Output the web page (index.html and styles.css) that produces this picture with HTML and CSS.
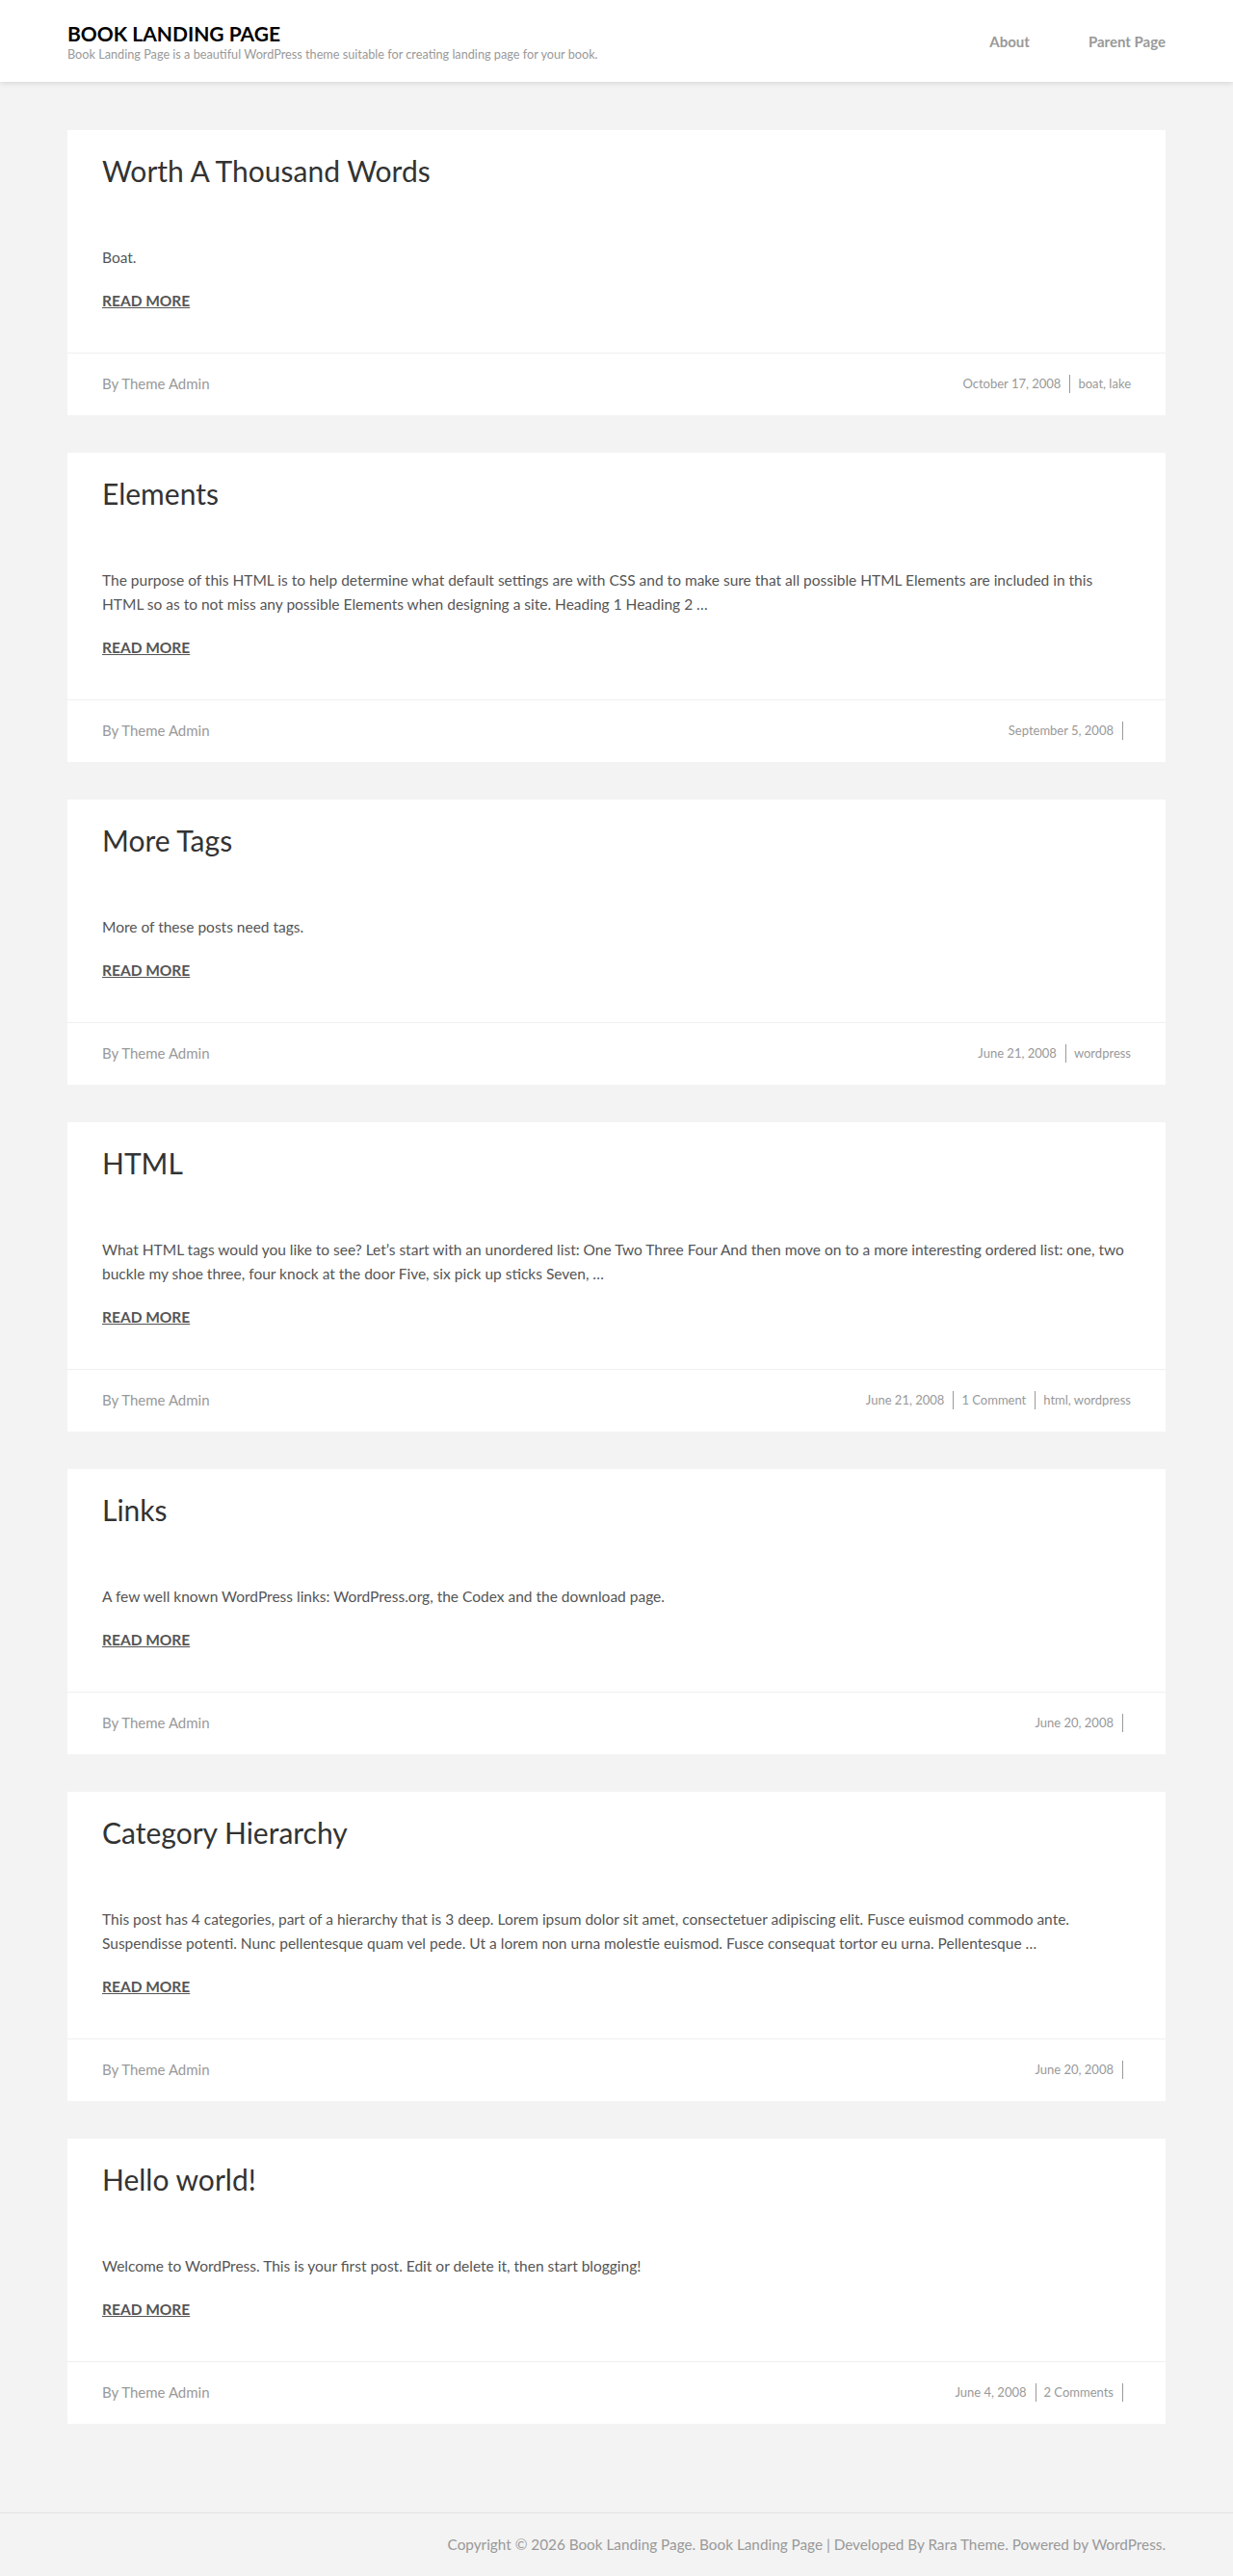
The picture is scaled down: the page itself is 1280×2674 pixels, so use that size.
FILE: index.html
```html
<!DOCTYPE html>
<html lang="en">
<head>
<meta charset="utf-8">
<title>Book Landing Page</title>
<link rel="stylesheet" href="styles.css">
</head>
<body>
<header class="site-header">
  <div class="container header-inner">
    <div class="branding">
      <div class="site-title">BOOK LANDING PAGE</div>
      <div class="site-desc">Book Landing Page is a beautiful WordPress theme suitable for creating landing page for your book.</div>
    </div>
    <nav class="main-nav">
      <a href="#">About</a>
      <a href="#">Parent Page</a>
    </nav>
  </div>
</header>

<main class="site-main">
  <div class="container">
    <article class="post">
      <div class="post-body">
        <h2 class="post-title">Worth A Thousand Words</h2>
        <p class="excerpt">Boat.</p>
        <p class="more"><a href="#">READ MORE</a></p>
      </div>
      <footer class="post-foot">
        <span class="author">By Theme Admin</span>
        <span class="meta"><span class="sep">October 17, 2008</span><span>boat, lake</span></span>
      </footer>
    </article>

    <article class="post">
      <div class="post-body">
        <h2 class="post-title">Elements</h2>
        <p class="excerpt">The purpose of this HTML is to help determine what default settings are with CSS and to make sure that all possible HTML Elements are included in this HTML so as to not miss any possible Elements when designing a site. Heading 1 Heading 2 …</p>
        <p class="more"><a href="#">READ MORE</a></p>
      </div>
      <footer class="post-foot">
        <span class="author">By Theme Admin</span>
        <span class="meta"><span class="sep">September 5, 2008</span><span></span></span>
      </footer>
    </article>

    <article class="post">
      <div class="post-body">
        <h2 class="post-title">More Tags</h2>
        <p class="excerpt">More of these posts need tags.</p>
        <p class="more"><a href="#">READ MORE</a></p>
      </div>
      <footer class="post-foot">
        <span class="author">By Theme Admin</span>
        <span class="meta"><span class="sep">June 21, 2008</span><span>wordpress</span></span>
      </footer>
    </article>

    <article class="post">
      <div class="post-body">
        <h2 class="post-title">HTML</h2>
        <p class="excerpt">What HTML tags would you like to see? Let’s start with an unordered list: One Two Three Four And then move on to a more interesting ordered list: one, two buckle my shoe three, four knock at the door Five, six pick up sticks Seven, …</p>
        <p class="more"><a href="#">READ MORE</a></p>
      </div>
      <footer class="post-foot">
        <span class="author">By Theme Admin</span>
        <span class="meta"><span class="sep">June 21, 2008</span><span class="sep">1 Comment</span><span>html, wordpress</span></span>
      </footer>
    </article>

    <article class="post">
      <div class="post-body">
        <h2 class="post-title">Links</h2>
        <p class="excerpt">A few well known WordPress links: WordPress.org, the Codex and the download page.</p>
        <p class="more"><a href="#">READ MORE</a></p>
      </div>
      <footer class="post-foot">
        <span class="author">By Theme Admin</span>
        <span class="meta"><span class="sep">June 20, 2008</span><span></span></span>
      </footer>
    </article>

    <article class="post">
      <div class="post-body">
        <h2 class="post-title">Category Hierarchy</h2>
        <p class="excerpt">This post has 4 categories, part of a hierarchy that is 3 deep. Lorem ipsum dolor sit amet, consectetuer adipiscing elit. Fusce euismod commodo ante. Suspendisse potenti. Nunc pellentesque quam vel pede. Ut a lorem non urna molestie euismod. Fusce consequat tortor eu urna. Pellentesque …</p>
        <p class="more"><a href="#">READ MORE</a></p>
      </div>
      <footer class="post-foot">
        <span class="author">By Theme Admin</span>
        <span class="meta"><span class="sep">June 20, 2008</span><span></span></span>
      </footer>
    </article>

    <article class="post">
      <div class="post-body">
        <h2 class="post-title">Hello world!</h2>
        <p class="excerpt">Welcome to WordPress. This is your first post. Edit or delete it, then start blogging!</p>
        <p class="more"><a href="#">READ MORE</a></p>
      </div>
      <footer class="post-foot">
        <span class="author">By Theme Admin</span>
        <span class="meta"><span class="sep">June 4, 2008</span><span class="sep">2 Comments</span><span></span></span>
      </footer>
    </article>
  </div>
</main>

<footer class="site-footer">
  <div class="container footer-inner">Copyright © 2026 Book Landing Page. Book Landing Page | Developed By Rara Theme. Powered by WordPress.</div>
</footer>
</body>
</html>
```

FILE: styles.css
```css
* { box-sizing: border-box; }

html, body {
  margin: 0;
  padding: 0;
}

body {
  background: #f3f3f3;
  font-family: Lato, "Open Sans", "Liberation Sans", sans-serif;
  color: #555;
  font-size: 15.5px;
  line-height: 26px;
}

a { color: inherit; }

.container {
  width: 1140px;
  margin: 0 auto;
}

.site-header {
  background: #fff;
  height: 85px;
  box-shadow: 0 2px 5px rgba(0, 0, 0, 0.1);
  position: relative;
  z-index: 1;
}

.header-inner {
  height: 85px;
  display: flex;
  align-items: center;
  justify-content: space-between;
}

.branding {
  padding-top: 2px;
}

.site-title {
  font-size: 21px;
  font-weight: 700;
  color: #000;
  line-height: 24px;
}

.site-desc {
  font-size: 12.7px;
  color: #999;
  line-height: 18px;
}

.main-nav {
  display: flex;
  gap: 61px;
  padding-top: 1px;
}

.main-nav a {
  font-size: 15px;
  font-weight: 700;
  color: #999;
  text-decoration: none;
}

.site-main {
  padding: 50px 0 53px;
}

.post {
  background: #fff;
  margin-bottom: 39px;
}

.post-body {
  padding: 24px 36px 41px;
}

.post-title {
  font-size: 30px;
  font-weight: 400;
  color: #333;
  line-height: 37px;
  margin: 0 0 59px;
}

.excerpt {
  margin: 0;
  line-height: 25px;
}

.more {
  margin: 19px 0 0;
  line-height: 26px;
}

.more a {
  font-weight: 700;
  color: #555;
  text-decoration: underline;
}

.post-foot {
  border-top: 1px solid #efefef;
  padding: 19px 36px 21px;
  display: flex;
  justify-content: space-between;
  align-items: center;
  line-height: 24px;
}

.author {
  font-size: 15px;
  color: #999;
}

.meta {
  font-size: 13px;
  color: #999;
  display: flex;
  align-items: center;
}

.meta > span {
  line-height: 19px;
}

.meta .sep {
  border-right: 1px solid #999;
  padding-right: 9px;
  margin-right: 8px;
}

.site-footer {
  border-top: 1px solid #e2e2e2;
  padding: 21px 0 22px;
}

.footer-inner {
  text-align: right;
  font-size: 15.3px;
  color: #999;
  line-height: 22px;
}
```
